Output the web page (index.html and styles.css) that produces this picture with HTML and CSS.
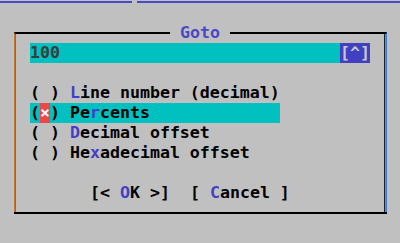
FILE: index.html
```html
<!DOCTYPE html>
<html lang="en">
<head>
  <meta charset="UTF-8">
  <title>Goto</title>
  <link rel="stylesheet" href="styles.css">
</head>
<body>

  <div class="topbar">
    <div class="seg first"></div>
    <div class="seg"></div>
  </div>

  <div class="dialog">
    <div class="title">Goto</div>

    <div class="input">
      <span class="value">100</span>
      <span class="hist">[^]</span>
    </div>

    <div class="options">
      <div class="opt">( ) <span class="hot">L</span>ine number (decimal)</div>
      <div class="opt sel">(<span class="mark">×</span>) Pe<span class="hot">r</span>cents</div>
      <div class="opt">( ) <span class="hot">D</span>ecimal offset</div>
      <div class="opt">( ) He<span class="hot">x</span>adecimal offset</div>
    </div>

    <div class="buttons">[&lt; <span class="hot">O</span>K &gt;]  [ <span class="hot">C</span>ancel ]</div>
  </div>
  <div class="frame-bottom"></div>

</body>
</html>
```

FILE: styles.css
```css
body {
  margin: 0;
  background-color: #c0c0c0;
  font-family: "DejaVu Sans Mono", "Liberation Mono", monospace;
  font-weight: bold;
  font-size: 16.6px;
  line-height: 20px;
  color: #000;
}
.topbar {
  display: flex;
  gap: 5px;
  margin-top: 1px;
  height: 2px;
}
.seg {
  flex: 1;
  background-color: #4848c8;
}
.seg.first {
  flex: 0 0 132px;
}
.dialog {
  position: relative;
  box-sizing: border-box;
  margin: 29px 0 0 14px;
  width: 373px;
  border-top: 2px solid #000;
  border-left: 1px solid #c87828;
  border-right: 1px solid #3a7ad8;
  box-shadow: inset 1px 0 0 #3a7ad8, inset -1px 0 0 #c87828, inset -2px 0 0 #202020;
  padding: 9px 16px 9px 15px;
}
.frame-bottom {
  margin-left: 14px;
  width: 373px;
  height: 2px;
  background-color: #000;
}
.title {
  position: absolute;
  top: -11px;
  left: 155px;
  padding: 0 10px;
  background-color: #c0c0c0;
  color: #4848c8;
}
.input {
  display: flex;
  justify-content: space-between;
  height: 20px;
  background-color: #00c0c0;
}
.value {
  color: #3c3c3c;
}
.hist {
  width: 30px;
  background-color: #4040c0;
  color: #c8c8c8;
}
.options {
  margin-top: 20px;
}
.opt {
  width: 250px;
  height: 20px;
  white-space: pre;
}
.opt.sel {
  background-color: #00c0c0;
}
.mark {
  display: inline-block;
  width: 10px;
  height: 20px;
  vertical-align: top;
  background-color: #ec4848;
  color: #fff;
  text-align: center;
}
.hot {
  color: #4040c8;
}
.buttons {
  margin-top: 20px;
  padding-left: 60px;
  white-space: pre;
}
```
